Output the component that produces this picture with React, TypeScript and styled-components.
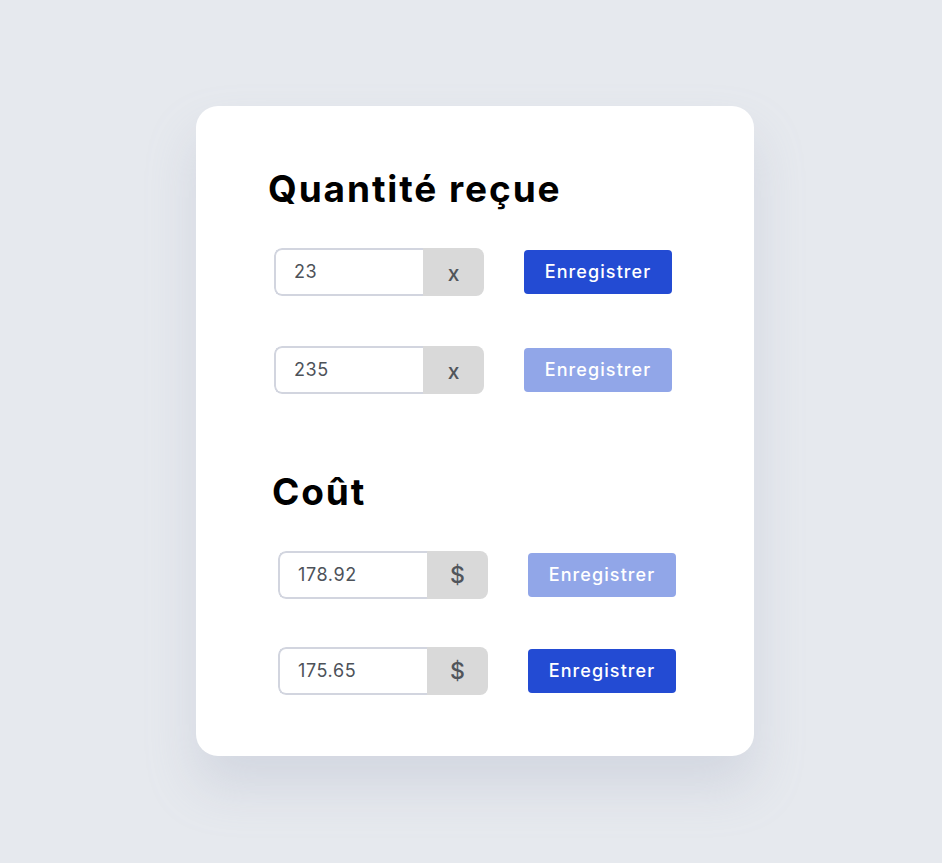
import styled, { createGlobalStyle } from "styled-components";

const GlobalStyle = createGlobalStyle`
  html, body {
    margin: 0;
    padding: 0;
    background: #e6e9ee;
    font-family: "Inter", "Open Sans", sans-serif;
  }
`;

interface FieldRow {
  value: string;
  unit: string;
  disabled?: boolean;
}

const quantityRows: FieldRow[] = [
  { value: "23", unit: "x" },
  { value: "235", unit: "x", disabled: true },
];

const costRows: FieldRow[] = [
  { value: "178.92", unit: "$", disabled: true },
  { value: "175.65", unit: "$" },
];

const App = () => {
  return (
    <>
      <GlobalStyle />
      <Page>
        <Card>
          <Section $shift={0}>
            <Title>Quantité reçue</Title>
            <Rows $gap={50}>
              {quantityRows.map((row) => (
                <Row key={row.value} row={row} />
              ))}
            </Rows>
          </Section>
          <Section $shift={4} $top={76}>
            <Title>Coût</Title>
            <Rows $gap={48}>
              {costRows.map((row) => (
                <Row key={row.value} row={row} />
              ))}
            </Rows>
          </Section>
        </Card>
      </Page>
    </>
  );
};

const Row = ({ row }: { row: FieldRow }) => (
  <RowBlock>
    <InputGroup>
      <Input defaultValue={row.value} />
      <Addon $big={row.unit === "$"}>{row.unit}</Addon>
    </InputGroup>
    <SaveButton $disabled={row.disabled}>Enregistrer</SaveButton>
  </RowBlock>
);

const Page = styled.div`
  min-height: 863px;
  padding: 106px 0 0 196px;
  box-sizing: border-box;
`;

const Card = styled.div`
  width: 558px;
  height: 650px;
  box-sizing: border-box;
  background: #fff;
  border-radius: 22px;
  padding: 61px 0 0 73px;
  box-shadow: 0 30px 50px rgba(160, 170, 190, 0.28);
`;

const Section = styled.div<{ $shift: number; $top?: number }>`
  margin-left: ${(p) => p.$shift}px;
  margin-top: ${(p) => p.$top ?? 0}px;
`;

const Title = styled.h2`
  margin: 0 0 37px -1px;
  font-size: 37px;
  line-height: 44px;
  font-weight: 700;
  color: #000;
  letter-spacing: 1.9px;
`;

const Rows = styled.div<{ $gap: number }>`
  display: flex;
  flex-direction: column;
  gap: ${(p) => p.$gap}px;
  padding-left: 5px;
`;

const RowBlock = styled.div`
  display: flex;
  align-items: center;
  gap: 40px;
`;

const InputGroup = styled.div`
  display: flex;
  width: 210px;
  height: 48px;
  border-radius: 8px;
  overflow: hidden;
`;

const Input = styled.input`
  width: 149px;
  height: 48px;
  box-sizing: border-box;
  border: 2px solid #d2d5df;
  border-right: none;
  border-radius: 8px 0 0 8px;
  padding: 0 0 2px 18px;
  font-family: "Inter", "Open Sans", sans-serif;
  font-size: 18px;
  letter-spacing: 0.6px;
  color: #4d5259;
  outline: none;
  background: #fff;
`;

const Addon = styled.div<{ $big?: boolean }>`
  flex: 1;
  display: flex;
  align-items: center;
  justify-content: center;
  background: #d9d9d9;
  color: #51555b;
  font-weight: 500;
  font-size: ${(p) => (p.$big ? 23 : 21)}px;
  padding-top: ${(p) => (p.$big ? 0 : 3)}px;
`;

const SaveButton = styled.button<{ $disabled?: boolean }>`
  width: 148px;
  height: 44px;
  border: none;
  border-radius: 4px;
  background: ${(p) => (p.$disabled ? "#91a6e8" : "#234bd3")};
  color: #fff;
  font-family: "Inter", "Open Sans", sans-serif;
  font-size: 18px;
  font-weight: 500;
  letter-spacing: 1.1px;
  padding: 0 0 2px;
  cursor: pointer;
`;

export default App;
